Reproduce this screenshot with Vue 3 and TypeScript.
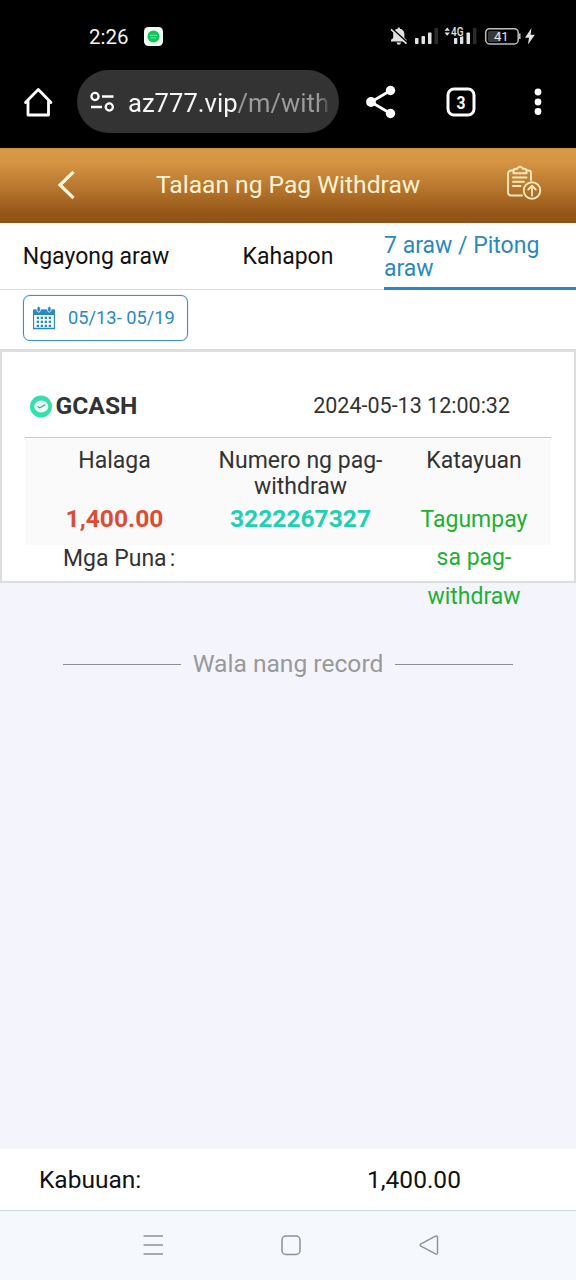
<script setup lang="ts">
interface Tab {
  label: string
  kind: string
}

const tabs: Tab[] = [
  { label: 'Ngayong araw', kind: 'today' },
  { label: 'Kahapon', kind: 'yesterday' },
  { label: '7 araw / Pitong araw', kind: 'week' },
]

const record = {
  method: 'GCASH',
  time: '2024-05-13 12:00:32',
  amount: '1,400.00',
  number: '3222267327',
  status: 'Tagumpay sa pag-withdraw',
}

const dotXs: number[] = [5, 9, 13, 17]
const dotYs: number[] = [11, 15, 19]
</script>

<template>
  <div class="screen">
    <div class="status">
      <span class="clock">2:26</span>
      <span class="app-badge">
        <svg width="19" height="19" viewBox="0 0 19 19">
          <rect width="19" height="19" rx="4.5" fill="#effff4" />
          <circle cx="9.5" cy="9.5" r="6" fill="#13c65b" />
          <path d="M6 8.5q3.5-.6 7 0M6.5 11q3-.5 5.500 0" stroke="#7be8a4" stroke-width="1" fill="none" />
        </svg>
      </span>
      <svg class="status-icons" width="150" height="24" viewBox="388 24 150 24">
        <path d="M391 41.500v-1.800l2.200-1.600v-4.300c0-3 2-4.600 4.600-5.100v-1.200h2v1.200c2.700.5 4.600 2.300 4.600 5.100v4.300l2.200 1.600v1.800zM396.500 42.600h4.600q-.4 2.200-2.300 2.200t-2.300-2.200z" fill="#e2e2e2" />
        <path d="M390.500 27.500L407 42.500" stroke="#000" stroke-width="2.200" />
        <path d="M391 29.300L406.500 43.600" stroke="#e2e2e2" stroke-width="1.700" />
        <g fill="#e2e2e2">
          <rect x="415" y="38" width="3.500" height="6" rx=".7" />
          <rect x="421.500" y="36" width="3.500" height="8" rx=".7" />
          <rect x="428" y="32.500" width="3.500" height="11.500" rx=".7" />
          <rect x="454" y="38" width="3.300" height="6" rx=".7" />
          <rect x="460" y="36" width="3.300" height="8" rx=".7" />
          <rect x="466.500" y="32.500" width="3.500" height="11.500" rx=".7" />
          <path d="M444.500 30.700l2.700-3.200 2.700 3.200zM444.500 32.500l2.700 3.200 2.700-3.200z" />
          <path d="M531.500 28l-6.500 9.800h4l-1 6.700 6.900-9.800h-4.300z" />
        </g>
        <rect x="434.500" y="28" width="3.500" height="16" rx=".7" fill="#2b2b2b" />
        <rect x="473" y="28" width="3.500" height="16" rx=".7" fill="#2b2b2b" />
        <text x="451" y="35.500" class="net" textLength="12.500" lengthAdjust="spacingAndGlyphs">4G</text>
        <rect x="488" y="31" width="13" height="11" rx="2" fill="#393939" />
        <rect x="485.700" y="28.700" width="32.500" height="15.200" rx="4" fill="none" stroke="#bdbdbd" stroke-width="1.500" />
        <path d="M519.800 33.500v5.500" stroke="#bdbdbd" stroke-width="1.500" />
        <text x="501.200" y="41.200" text-anchor="middle" class="batt">41</text>
      </svg>
    </div>

    <div class="browser">
      <svg class="home" width="32" height="32" viewBox="0 0 32 32" fill="none" stroke="#fff" stroke-width="2.800" stroke-linejoin="round" stroke-linecap="round">
        <path d="M3.500 16.500L16.300 3.500 29 16.500M6 14.500V29h20.500V14.500" />
      </svg>
      <div class="url">
        <svg width="26" height="22" viewBox="0 0 26 22" fill="none" stroke="#fff" stroke-width="2.300">
          <circle cx="6" cy="5.500" r="3.600" />
          <path d="M13 5.500h11.500M2 16h11" />
          <circle cx="20.300" cy="16" r="3.600" />
        </svg>
        <span class="address">az777.vip<i>/m/with</i></span>
      </div>
      <svg class="share" width="32" height="34" viewBox="0 0 32 34" fill="#fff">
        <path d="M25.500 5.500L6 17l19.500 11.500" fill="none" stroke="#fff" stroke-width="2.800" />
        <circle cx="25.500" cy="5.500" r="4.700" /><circle cx="6" cy="17" r="4.900" /><circle cx="25.500" cy="28.500" r="4.700" />
      </svg>
      <svg class="count" width="30" height="30" viewBox="0 0 30 30">
        <rect x="2" y="2" width="26" height="26" rx="6" fill="none" stroke="#fff" stroke-width="3" />
        <text x="10.500" y="21.500" textLength="9" lengthAdjust="spacingAndGlyphs">3</text>
      </svg>
      <svg class="more" width="8" height="28" viewBox="0 0 8 28" fill="#fff">
        <circle cx="4" cy="4" r="3.400" /><circle cx="4" cy="14" r="3.400" /><circle cx="4" cy="23.500" r="3.400" />
      </svg>
    </div>

    <header class="header">
      <svg class="back" width="20" height="30" viewBox="0 0 20 30" fill="none" stroke="#fff6dc" stroke-width="3.200">
        <path d="M17.500 1.800L4 15l13.500 13" />
      </svg>
      <h1>Talaan ng Pag Withdraw</h1>
      <svg class="clip" width="36" height="36" viewBox="0 0 36 36" fill="none" stroke="#ffe9bd" stroke-width="1.900" stroke-linecap="round" stroke-linejoin="round">
        <path d="M7.500 5.500H5.500Q2 5.500 2 9v18q0 3.500 3.500 3.500H16M21 5.500h1.500Q25 5.500 25 8v7" />
        <path d="M7.500 8.300V6q0-2.200 2.500-2.200h1.200Q12 1.700 14 1.700T16.800 3.800H18q2.500 0 2.500 2.200v2.300z" />
        <path d="M7 12.500h13.500M7 16.800h11M7 21h7.500" />
        <circle cx="26" cy="25.500" r="8.300" />
        <path d="M26 30.500V21M22.200 24.600l3.800-3.900 3.800 3.900" />
      </svg>
    </header>

    <nav class="tabs">
      <div v-for="tab in tabs" :key="tab.kind" class="tab" :class="tab.kind"><span>{{ tab.label }}</span></div>
    </nav>

    <div class="filter">
      <div class="range">
        <svg width="22" height="24" viewBox="0 0 22 24">
          <path d="M.5 4.500h21v18h-21z" fill="#fff" stroke="#2b88c3" stroke-width="1.300" />
          <path d="M0 3.500h22V9H0z" fill="#2b88c3" />
          <rect x="4" y=".5" width="3.400" height="5.500" rx="1.600" fill="#2b88c3" stroke="#fff" stroke-width=".8" />
          <rect x="14.600" y=".5" width="3.400" height="5.500" rx="1.600" fill="#2b88c3" stroke="#fff" stroke-width=".8" />
          <template v-for="y in dotYs" :key="y">
            <rect v-for="x in dotXs" :key="x" :x="x - 1.300" :y="y - 0.300" width="2.300" height="2.300" fill="#2b88c3" />
          </template>
        </svg>
        <span>05/13- 05/19</span>
      </div>
    </div>

    <main class="content">
      <section class="card">
        <div class="card-head">
          <svg width="23" height="23" viewBox="0 0 23 23">
            <circle cx="11" cy="11.500" r="11" fill="#35dfb0" />
            <ellipse cx="11.300" cy="11.500" rx="7" ry="6" fill="#e9fff8" />
            <path d="M7.500 11.200l2.200 1.600 5.500-3.100" fill="none" stroke="#4d9d88" stroke-width="1.200" />
          </svg>
          <strong>{{ record.method }}</strong>
          <time>{{ record.time }}</time>
        </div>
        <div class="grid">
          <div class="col amount">
            <div class="label">Halaga</div>
            <div class="value">{{ record.amount }}</div>
          </div>
          <div class="col number">
            <div class="label">Numero ng pag-withdraw</div>
            <div class="value">{{ record.number }}</div>
          </div>
          <div class="col state">
            <div class="label">Katayuan</div>
            <div class="value">{{ record.status }}</div>
          </div>
        </div>
        <div class="remark">Mga Puna<span>:</span></div>
      </section>
      <div class="end"><hr /><span>Wala nang record</span><hr /></div>
    </main>

    <footer class="total">
      <span class="total-label">Kabuuan:</span>
      <span class="total-value">1,400.00</span>
    </footer>

    <div class="navbar">
      <svg width="22" height="22" viewBox="0 0 22 22" fill="none" stroke="#8d9196" stroke-width="1.500"><path d="M1.500 2H21M1.500 11H21M1.500 20H21" /></svg>
      <svg width="22" height="22" viewBox="0 0 22 22" fill="none" stroke="#8d9196" stroke-width="1.500"><rect x="2" y="2" width="18" height="18.500" rx="4" /></svg>
      <svg width="22" height="22" viewBox="0 0 22 22" fill="none" stroke="#8d9196" stroke-width="1.400" stroke-linejoin="round"><path d="M3 9.900L17.500 2.200Q19.500 1.500 19.500 3.500v15.200q0 2-2 1.200L3 12.100q-1.800-1.100 0-2.200z" /></svg>
    </div>
  </div>
</template>

<style>
body {
  margin: 0;
}
</style>

<style scoped>
.screen {
  width: 576px;
  height: 1280px;
  display: flex;
  flex-direction: column;
  overflow: hidden;
  background: #f4f4fd;
  color: #333;
  font-family: Roboto, "Liberation Sans", sans-serif;
  font-size: 23px;
}
.screen > * {
  flex: none;
}
svg {
  display: block;
  flex: none;
}
.status {
  height: 72px;
  box-sizing: border-box;
  padding: 24px 38px 0 89px;
  background: #000;
  display: flex;
}
.clock {
  width: 55px;
  height: 26px;
  line-height: 26px;
  font-size: 20.500px;
  color: #f3f3f3;
}
.app-badge {
  margin-top: 3px;
}
.status-icons {
  margin-left: auto;
}
.net {
  font-size: 12px;
  font-weight: 500;
  fill: #e2e2e2;
  stroke: #000;
  stroke-width: 1.500px;
  paint-order: stroke;
}
.batt {
  font-size: 13px;
  fill: #e8e8e8;
}
.browser {
  height: 76px;
  box-sizing: border-box;
  padding-bottom: 17px;
  background: #000;
  display: flex;
  align-items: center;
}
.home {
  margin-left: 22px;
}
.url {
  width: 262px;
  height: 63px;
  margin-left: 23px;
  box-sizing: border-box;
  padding: 0 10px 0 12px;
  border-radius: 32px;
  background: #333;
  display: flex;
  align-items: center;
}
.address {
  width: 201px;
  margin-left: 13px;
  padding-top: 2px;
  white-space: nowrap;
  color: #f6f6f6;
  font-size: 25.600px;
  line-height: 40px;
  mask-image: linear-gradient(90deg, #000 190px, transparent 203px);
}
.address i {
  font-style: normal;
  color: #9b9b9b;
}
.share {
  margin-left: 26px;
}
.count {
  margin: 0 0 0 49px;
}
.count text {
  font-size: 18.500px;
  font-weight: 700;
  fill: #fff;
}
.more {
  margin: 1px 0 0 58px;
}
.header {
  height: 75px;
  background: linear-gradient(#c99248 0, #d99946 3px, #d49342 15px, #b97930 38px, #965717 65px, #8e5219 75px);
  display: flex;
  align-items: center;
}
.back {
  margin: -2px 0 0 56px;
}
h1 {
  margin: -2px 0 0 80px;
  width: 264px;
  white-space: nowrap;
  font-size: 24.600px;
  font-weight: 400;
  line-height: 36px;
  color: #fff3d8;
}
.clip {
  margin: -6px 0 0 86px;
}
.tabs {
  height: 67px;
  background: #fff;
  display: grid;
  grid-template-columns: repeat(3, 1fr);
  color: #111;
}
.tab {
  box-sizing: border-box;
  display: flex;
  align-items: center;
  justify-content: center;
  border-bottom: 1px solid #ddd;
  line-height: 23px;
}
.week {
  justify-content: flex-start;
  padding-top: 3px;
  color: #2b88c3;
  border-bottom: 3px solid #2b88c3;
}
.filter {
  height: 59px;
  box-sizing: border-box;
  padding: 5px 23px;
  background: #fff;
}
.range {
  width: 165px;
  height: 46px;
  box-sizing: border-box;
  padding: 0 0 1px 9px;
  border: 1.500px solid #3f8fc0;
  border-radius: 7px;
  box-shadow: 0 0 1px #3f8fc0;
  display: flex;
  align-items: center;
  color: #2b88c3;
  font-size: 18.300px;
}
.range span {
  margin-left: 13px;
  margin-top: -1px;
  white-space: nowrap;
}
.content {
  height: 800px;
}
.card {
  height: 234px;
  box-sizing: border-box;
  padding: 0 23px;
  border: 2px solid #ddd;
  border-top-width: 3px;
  background: #fff;
}
.card-head {
  height: 86px;
  box-sizing: border-box;
  padding: 22px 41px 0 5px;
  border-bottom: 1px solid #ccc;
  display: flex;
  align-items: center;
}
.card-head svg {
  margin-top: 1px;
}
.card-head strong {
  margin-left: 2.500px;
  font-size: 24.600px;
}
.card-head time {
  margin-left: auto;
  font-size: 21.500px;
}
.grid {
  height: 107px;
  display: grid;
  grid-template-columns: 179px 193px 154px;
  background: #fafafa;
  text-align: center;
}
.label {
  height: 62px;
  box-sizing: border-box;
  padding-top: 10px;
  line-height: 26px;
}
.value {
  line-height: 38.400px;
}
.amount .value {
  color: #dc4d35;
  font-weight: 700;
  font-size: 24.600px;
}
.number .value {
  color: #22cfb3;
  font-weight: 700;
  font-size: 24.600px;
}
.number .label {
  padding-left: 10px;
  padding-right: 10px;
}
.state .value {
  padding: 1px 20px 0;
  color: #1fb034;
}
.remark {
  padding: 1px 0 0 38px;
  line-height: 26px;
}
.remark span {
  margin-left: 3px;
}
.end {
  padding: 64px 63px 0;
  display: flex;
  align-items: center;
  justify-content: space-between;
  color: #999;
  font-size: 24.600px;
  line-height: 34px;
}
.end hr {
  width: 118px;
  height: 1px;
  margin: 1px 0 0;
  border: 0;
  background: #8f8f8f;
}
.total {
  height: 62px;
  box-sizing: border-box;
  padding: 0 39px 1px;
  border-bottom: 1px solid #ccd9de;
  background: #fff;
  color: #111;
  display: flex;
  align-items: center;
  font-size: 24.500px;
}
.total-label {
  width: 328px;
}
.navbar {
  height: 69px;
  box-sizing: border-box;
  padding: 0 0 2px 6px;
  background: #f5f9fe;
  display: flex;
  align-items: center;
  justify-content: center;
  gap: 116px;
}
</style>
